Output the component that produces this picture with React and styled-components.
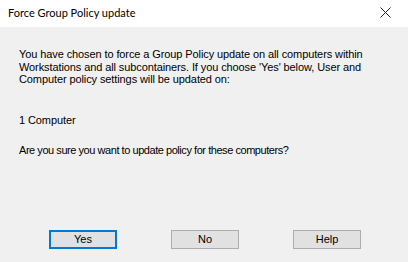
import React from 'react'
import styled, { createGlobalStyle } from 'styled-components'

const Global = createGlobalStyle`
    html, body {
        margin: 0;
        padding: 0;
        background: #f0f0f0;
    }
`;

function App() {
    return (
        <Dialog>
            <Global />
            <TitleBar>
                <Title>Force Group Policy update</Title>
                <Close aria-label="Close">
                    <svg width="11" height="11" viewBox="0 0 11 11">
                        <path d="M0.5 0.5 L10.5 10.5 M10.5 0.5 L0.5 10.5" stroke="#222" strokeWidth="1" fill="none" />
                    </svg>
                </Close>
            </TitleBar>
            <Body>
                <Text>
                    You have chosen to force a Group Policy update on all computers within<br />
                    Workstations and all subcontainers. If you choose 'Yes' below, User and<br />
                    Computer policy settings will be updated on:
                </Text>
                <Text $gap={28}>1 Computer</Text>
                <Text $gap={18} $tight>Are you sure you want to update policy for these computers?</Text>
                <Buttons>
                    <Button $primary>Yes</Button>
                    <Button>No</Button>
                    <Button>Help</Button>
                </Buttons>
            </Body>
        </Dialog>
    )
}
export default App

const Dialog = styled.div`
    width: 408px;
    height: 262px;
    display: flex;
    flex-direction: column;
    background: #f0f0f0;
    overflow: hidden;
`;
const TitleBar = styled.div`
    height: 24px;
    background: #fff;
    display: flex;
    align-items: center;
    justify-content: space-between;
    padding: 0 17px 3px 8px;
`;
const Title = styled.span`
    font-family: Lato, "Noto Sans", sans-serif;
    font-size: 11px;
    color: #000;
`;
const Close = styled.span`
    display: flex;
    align-items: center;
`;
const Body = styled.div`
    flex: 1;
    padding: 21px 0 0 19px;
    display: flex;
    flex-direction: column;
    font-family: "Liberation Sans", sans-serif;
    font-size: 11px;
    color: #000;
    line-height: 12.5px;
`;
const Text = styled.p`
    margin: ${p => p.$gap || 0}px 0 0;
    white-space: nowrap;
    letter-spacing: ${p => p.$tight ? '-0.45px' : '-0.1px'};
`;
const Buttons = styled.div`
    margin: 73px 0 0 30px;
    display: flex;
    gap: 54px;
`;
const Button = styled.button`
    width: 68px;
    height: 19px;
    padding: 0;
    background: #e1e1e1;
    border: 1px solid ${p => p.$primary ? '#0078d7' : '#adadad'};
    box-shadow: ${p => p.$primary ? 'inset 0 0 0 1px #0078d7' : 'none'};
    font-family: "Liberation Sans", sans-serif;
    font-size: 11px;
    color: #000;
`;
